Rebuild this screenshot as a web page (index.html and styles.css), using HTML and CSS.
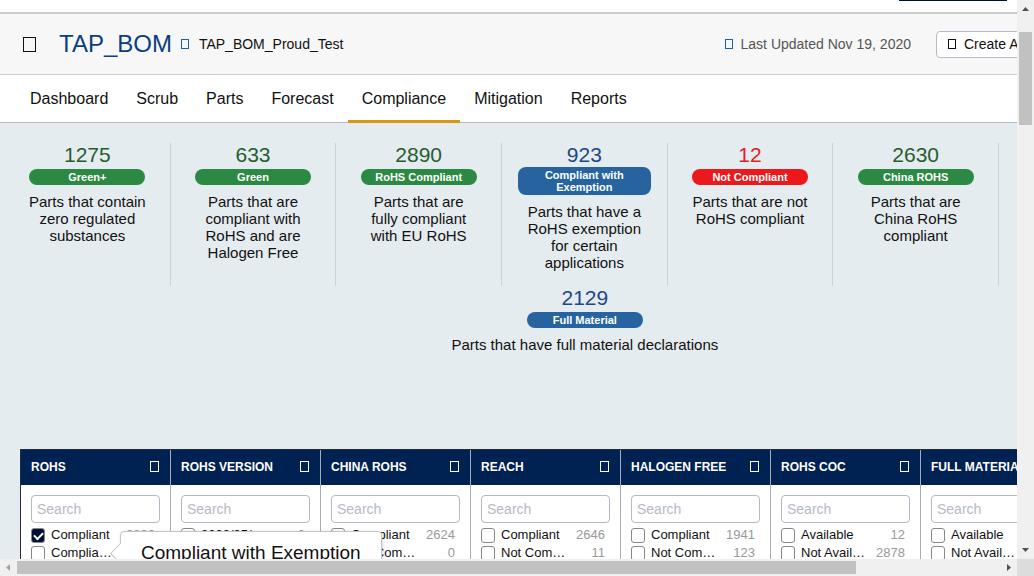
FILE: index.html
```html
<!DOCTYPE html>
<html lang="en">
<head>
<meta charset="utf-8">
<title>TAP_BOM - Compliance</title>
<link rel="stylesheet" href="styles.css">
</head>
<body>
<div class="window">
  <div class="page">
    <div class="topbar"><span class="topbar-button"></span></div>
    <header class="header">
      <span class="glyph glyph-large"></span>
      <h1 class="title">TAP_BOM</h1>
      <span class="glyph glyph-small glyph-blue"></span>
      <span class="subtitle">TAP_BOM_Proud_Test</span>
      <div class="header-side">
        <span class="glyph glyph-small glyph-blue"></span>
        <span class="updated">Last Updated Nov 19, 2020</span>
        <button class="create" type="button"><span class="glyph glyph-small"></span><span>Create Alert</span></button>
      </div>
    </header>
    <nav class="tabs">
      <a class="tab" href="#dashboard">Dashboard</a>
      <a class="tab" href="#scrub">Scrub</a>
      <a class="tab" href="#parts">Parts</a>
      <a class="tab" href="#forecast">Forecast</a>
      <a class="tab tab-active" href="#compliance">Compliance</a>
      <a class="tab" href="#mitigation">Mitigation</a>
      <a class="tab" href="#reports">Reports</a>
    </nav>
    <main class="content">
      <section class="legend">
        <div class="stat green"><div class="count">1275</div><div class="pill">Green+</div><p class="desc">Parts that contain zero regulated substances</p></div>
        <div class="stat green"><div class="count">633</div><div class="pill">Green</div><p class="desc">Parts that are compliant with RoHS and are Halogen Free</p></div>
        <div class="stat green"><div class="count">2890</div><div class="pill">RoHS Compliant</div><p class="desc">Parts that are fully compliant with EU RoHS</p></div>
        <div class="stat blue"><div class="count">923</div><div class="pill pill-tall">Compliant with Exemption</div><p class="desc">Parts that have a RoHS exemption for certain applications</p></div>
        <div class="stat red"><div class="count">12</div><div class="pill">Not Compliant</div><p class="desc">Parts that are not RoHS compliant</p></div>
        <div class="stat green"><div class="count">2630</div><div class="pill">China ROHS</div><p class="desc">Parts that are China RoHS compliant</p></div>
        <div class="stat stat-wide blue"><div class="count">2129</div><div class="pill">Full Material</div><p class="desc">Parts that have full material declarations</p></div>
      </section>
      <section class="filters">
        <div class="filter">
          <h2 class="filter-head">ROHS<span class="glyph glyph-medium"></span></h2>
          <div class="filter-body">
            <input class="search" type="text" placeholder="Search" aria-label="Search ROHS">
            <label class="option"><input class="check" type="checkbox" checked><span class="name">Compliant</span><span class="total">2890</span></label>
            <div class="tip-anchor">
              <label class="option"><input class="check" type="checkbox"><span class="name">Compliant with Exemption</span><span class="total"></span></label>
              <div class="tip" role="tooltip">Compliant with Exemption</div>
            </div>
          </div>
        </div>
        <div class="filter">
          <h2 class="filter-head">ROHS VERSION<span class="glyph glyph-medium"></span></h2>
          <div class="filter-body">
            <input class="search" type="text" placeholder="Search" aria-label="Search ROHS version">
            <label class="option"><input class="check" type="checkbox"><span class="name">2002/95/</span><span class="total">0</span></label>
          </div>
        </div>
        <div class="filter">
          <h2 class="filter-head">CHINA ROHS<span class="glyph glyph-medium"></span></h2>
          <div class="filter-body">
            <input class="search" type="text" placeholder="Search" aria-label="Search China ROHS">
            <label class="option"><input class="check" type="checkbox"><span class="name">Compliant</span><span class="total">2624</span></label>
            <label class="option"><input class="check" type="checkbox"><span class="name">Not Compliant</span><span class="total">0</span></label>
          </div>
        </div>
        <div class="filter">
          <h2 class="filter-head">REACH<span class="glyph glyph-medium"></span></h2>
          <div class="filter-body">
            <input class="search" type="text" placeholder="Search" aria-label="Search REACH">
            <label class="option"><input class="check" type="checkbox"><span class="name">Compliant</span><span class="total">2646</span></label>
            <label class="option"><input class="check" type="checkbox"><span class="name">Not Compliant</span><span class="total">11</span></label>
          </div>
        </div>
        <div class="filter">
          <h2 class="filter-head">HALOGEN FREE<span class="glyph glyph-medium"></span></h2>
          <div class="filter-body">
            <input class="search" type="text" placeholder="Search" aria-label="Search halogen free">
            <label class="option"><input class="check" type="checkbox"><span class="name">Compliant</span><span class="total">1941</span></label>
            <label class="option"><input class="check" type="checkbox"><span class="name">Not Compliant</span><span class="total">123</span></label>
          </div>
        </div>
        <div class="filter">
          <h2 class="filter-head">ROHS COC<span class="glyph glyph-medium"></span></h2>
          <div class="filter-body">
            <input class="search" type="text" placeholder="Search" aria-label="Search ROHS COC">
            <label class="option"><input class="check" type="checkbox"><span class="name">Available</span><span class="total">12</span></label>
            <label class="option"><input class="check" type="checkbox"><span class="name">Not Available</span><span class="total">2878</span></label>
          </div>
        </div>
        <div class="filter">
          <h2 class="filter-head">FULL MATERIAL</h2>
          <div class="filter-body">
            <input class="search" type="text" placeholder="Search" aria-label="Search full material">
            <label class="option"><input class="check" type="checkbox"><span class="name">Available</span><span class="total"></span></label>
            <label class="option"><input class="check" type="checkbox"><span class="name">Not Available</span><span class="total"></span></label>
          </div>
        </div>
      </section>
    </main>
  </div>
  <div class="vbar">
    <svg class="arrow" width="17" height="17" viewBox="0 0 17 17"><path d="M5 11h7L8.500 7z" fill="#505050"/></svg>
    <div class="vtrack"><div class="vthumb"></div></div>
    <svg class="arrow" width="17" height="17" viewBox="0 0 17 17"><path d="M5 6h7L8.500 10z" fill="#505050"/></svg>
  </div>
  <div class="hbar">
    <svg class="arrow" width="17" height="17" viewBox="0 0 17 17"><path d="M10 5v7L6 8.500z" fill="#a3a3a3"/></svg>
    <div class="htrack"><div class="hthumb"></div></div>
    <svg class="arrow" width="17" height="17" viewBox="0 0 17 17"><path d="M7 5v7L11 8.500z" fill="#505050"/></svg>
  </div>
  <div class="corner"></div>
</div>
</body>
</html>
```
FILE: styles.css
```css
* { box-sizing: border-box; }
body {
  margin: 0;
  font-family: "Liberation Sans", Arial, sans-serif;
  color: #111;
}
.window {
  display: grid;
  grid-template-columns: minmax(0, 1fr) 17px;
  grid-template-rows: minmax(0, 1fr) 17px;
  height: 100vh;
}
.page {
  overflow: hidden;
  background: #e5ecef;
}
.topbar {
  display: flex;
  justify-content: flex-end;
  height: 14px;
  padding-right: 10px;
  background: #fff;
  border-bottom: 2px solid #ccc;
}
.topbar-button {
  width: 108px;
  height: 1px;
  background: #001233;
}
.glyph {
  flex: none;
  border: 1px solid currentColor;
}
.glyph-large { width: 13px; height: 15px; margin-right: 23px; }
.glyph-medium { width: 9px; height: 11px; }
.glyph-small { width: 8px; height: 10px; }
.glyph-blue { color: #1560a8; }
.header {
  display: flex;
  align-items: center;
  height: 61px;
  padding-left: 23px;
  background: #f7f7f7;
  border-bottom: 1px solid #ccc;
  white-space: nowrap;
}
.title {
  margin: 0 9px 0 0;
  font-size: 24px;
  font-weight: 400;
  color: #0a4080;
}
.subtitle { margin-left: 10px; font-size: 14px; }
.header-side {
  display: flex;
  flex: none;
  align-items: center;
  margin-left: auto;
  margin-right: -24px;
}
.updated {
  margin: 0 25px 0 8px;
  font-size: 14px;
  color: #555;
}
.create {
  display: flex;
  align-items: center;
  gap: 8px;
  width: 105px;
  height: 27px;
  padding: 0 11px;
  overflow: hidden;
  font-family: inherit;
  font-size: 14px;
  color: #111;
  white-space: nowrap;
  background: #fff;
  border: 1px solid #b4bccb;
  border-radius: 4px;
}
.tabs {
  display: flex;
  height: 48px;
  padding-left: 16px;
  background: #fff;
  border-bottom: 1px solid #b4b9c6;
}
.tab {
  height: 48px;
  padding: 0 14px;
  font-size: 16px;
  line-height: 47px;
  color: #111;
  text-decoration: none;
}
.tab-active { border-bottom: 3px solid #da9710; }
.legend {
  display: grid;
  grid-template-columns: repeat(6, minmax(0, 1fr));
  padding: 20px 18px 95px 5px;
}
.stat {
  padding: 0 16px 15px;
  text-align: center;
  border-right: 1px solid #cad2d5;
}
.stat-wide {
  grid-column: 3 / span 3;
  padding-bottom: 1px;
  border-right: 0;
}
.count { font-size: 21px; line-height: 24px; }
.pill {
  width: 116px;
  margin: 2px auto 8px;
  padding: 2px 0;
  font-size: 11px;
  font-weight: 700;
  line-height: 12px;
  color: #fff;
  border-radius: 8px;
}
.pill-tall {
  width: auto;
  margin-top: 0;
  padding: 2px 20px;
}
.green .count { color: #265c30; }
.green .pill { background: #2c8943; }
.blue .count { color: #1c4886; }
.blue .pill { background: #27649f; }
.red .count { color: #e02026; }
.red .pill { background: #eb191b; }
.desc { margin: 0; padding: 0 7px; font-size: 15px; line-height: 17px; }
.filters {
  display: flex;
  margin-left: 20px;
  border-top: 1px solid #252c3a;
  border-left: 1px solid #252c3a;
}
.filter {
  flex: none;
  width: 150px;
  height: 180px;
  background: #fff;
  border-right: 1px solid #a9abb7;
}
.filter-head {
  display: flex;
  align-items: center;
  justify-content: space-between;
  height: 35px;
  margin: 0;
  padding: 0 11px 2px 10px;
  font-size: 12px;
  color: #fff;
  white-space: nowrap;
  background: #002252;
}
.filter-body { padding: 10px; }
.search {
  display: block;
  width: 100%;
  height: 28px;
  margin-bottom: 3px;
  padding: 0 5px;
  font-family: inherit;
  font-size: 14px;
  border: 1px solid #b4b7c5;
  border-radius: 4px;
}
.search::placeholder { color: #b6bac5; }
.option {
  display: flex;
  align-items: center;
  height: 18px;
  padding-right: 5px;
  font-size: 13px;
  line-height: 18px;
}
.check {
  flex: none;
  width: 14px;
  height: 15px;
  margin: 0 6px 0 0;
  appearance: none;
  background: #fff;
  border: 1px solid #888;
  border-radius: 3px;
}
.check:checked {
  display: grid;
  place-items: center;
  background: #001233;
}
.check:checked::after {
  width: 7px;
  height: 4px;
  border: solid #fff;
  border-width: 0 0 2px 2px;
  transform: rotate(-45deg);
  content: "";
}
.name {
  flex: none;
  width: 66px;
  overflow: hidden;
  text-overflow: ellipsis;
  white-space: nowrap;
}
.total { margin-left: auto; color: #999; }
.tip-anchor { position: relative; }
.tip {
  position: absolute;
  z-index: 2;
  top: -13px;
  left: 89px;
  padding: 0 20px;
  font-size: 19px;
  line-height: 42px;
  white-space: nowrap;
  background: #fff;
  border: 1px solid #c4c4c4;
  border-radius: 4px;
  box-shadow: 1px 1px 4px rgba(0, 0, 0, 0.15);
}
.tip::before {
  position: absolute;
  top: 14px;
  left: -8px;
  width: 14px;
  height: 14px;
  background: #fff;
  border: solid #c4c4c4;
  border-width: 0 0 1px 1px;
  transform: rotate(45deg);
  content: "";
}
.arrow { display: block; flex: none; }
.vbar {
  display: flex;
  flex-direction: column;
  background: #f0f0f0;
}
.vtrack { flex: 1; padding: 0 2px; }
.vthumb { height: 93px; margin-top: 15px; background: #c1c1c1; }
.hbar { display: flex; background: #f0f0f0; }
.htrack { flex: 1; padding: 2px 0; }
.hthumb { width: 85.400%; height: 13px; background: #c1c1c1; }
.corner { background: #dcdcdc; }
```
